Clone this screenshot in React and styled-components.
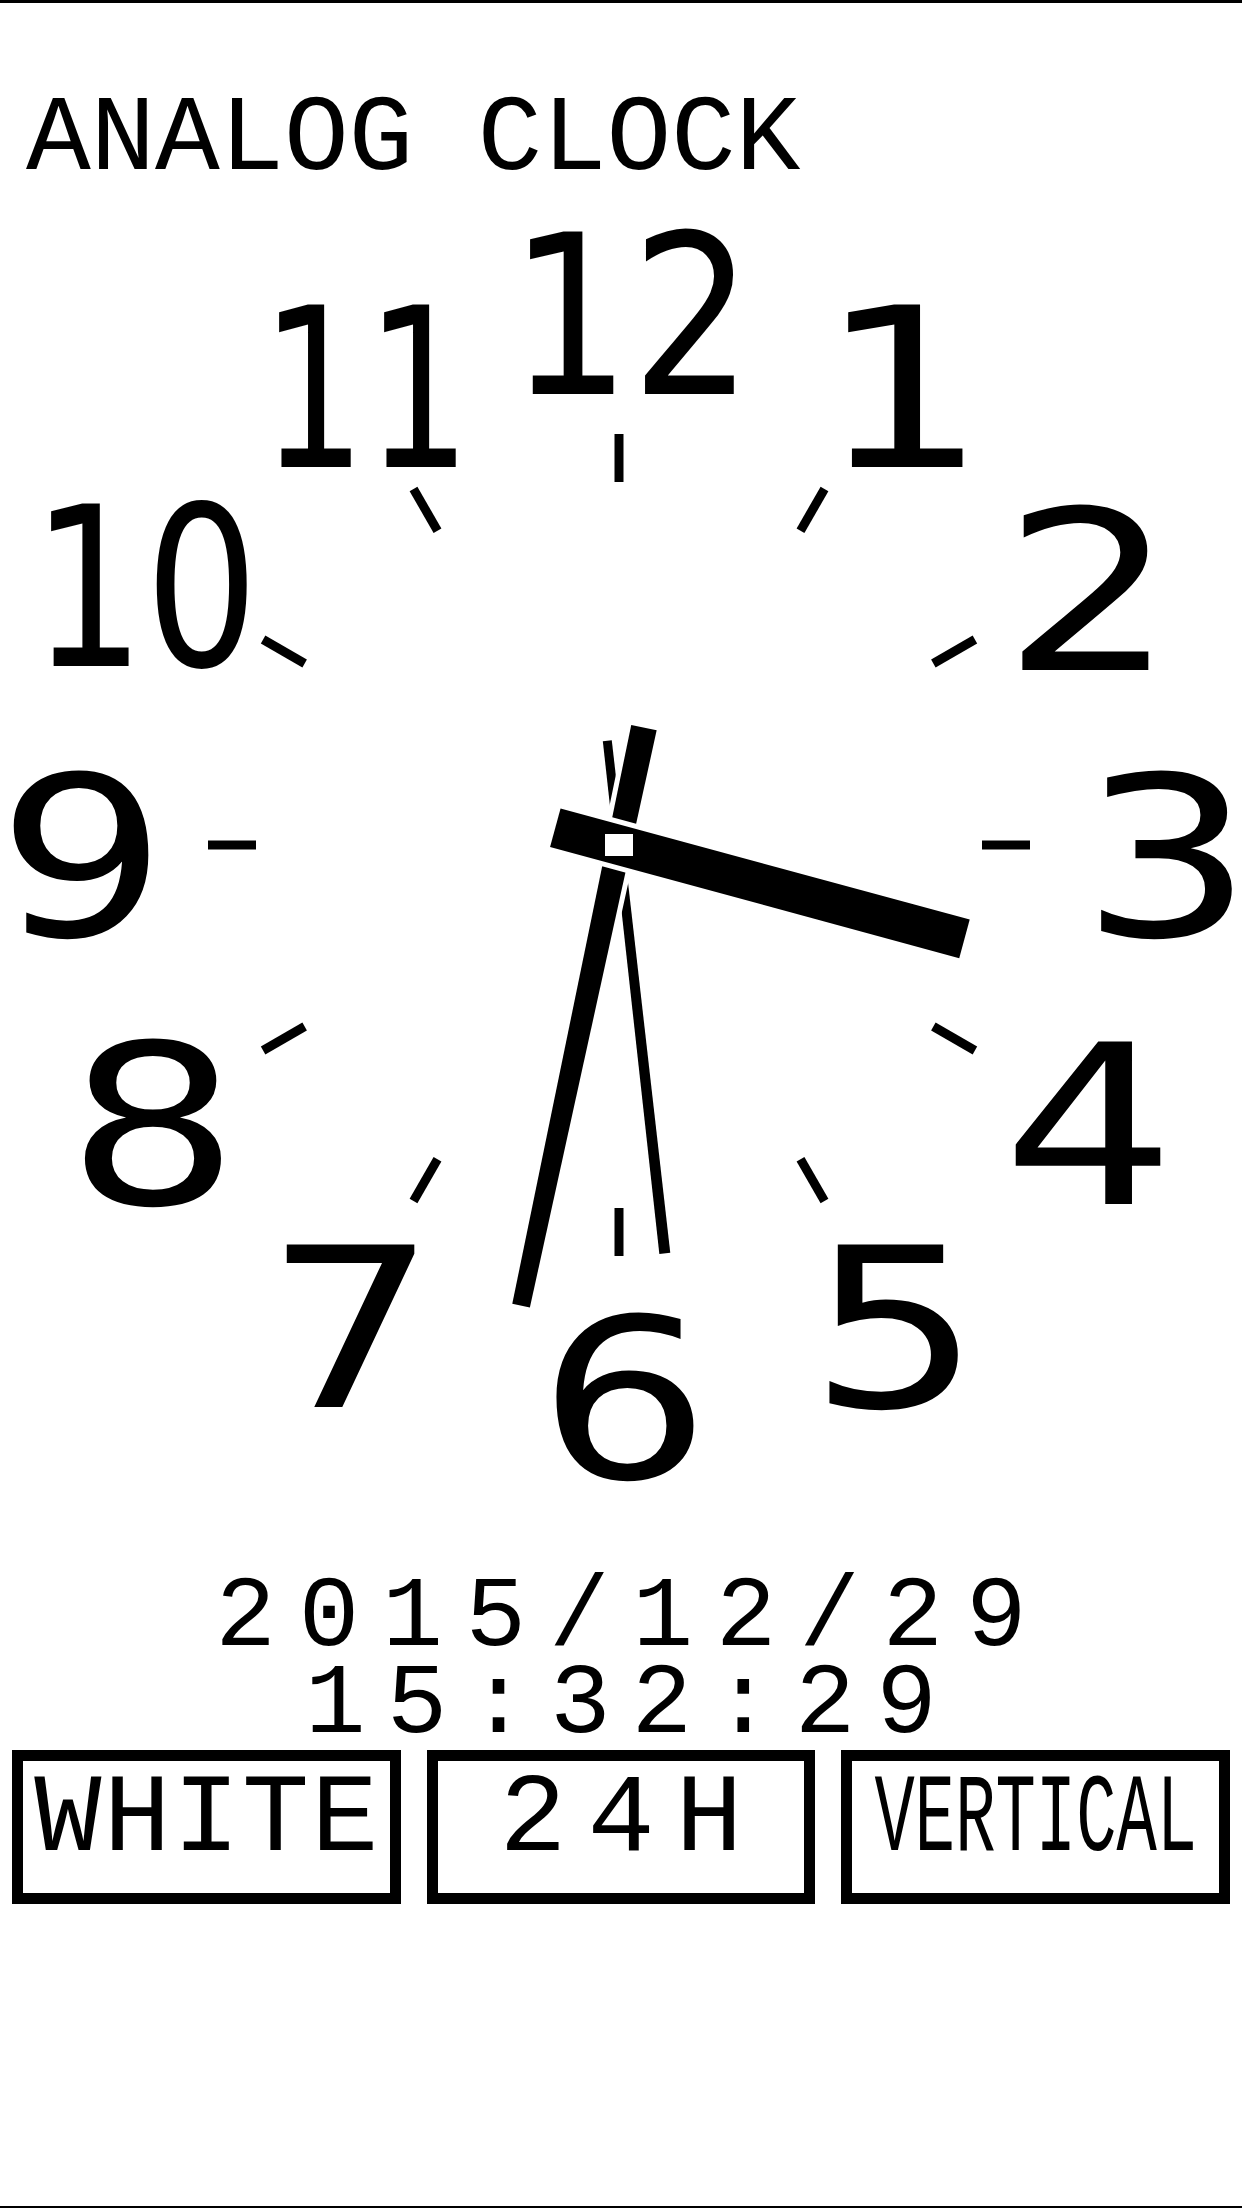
import React from 'react';
import styled, { createGlobalStyle } from 'styled-components';

const GlobalStyle = createGlobalStyle`
  html, body {
    margin: 0;
    padding: 0;
    background: #fff;
  }
  body {
    font-family: "Liberation Mono", monospace;
  }
`;

const Screen = styled.div`
  width: 1242px;
  height: 2208px;
  box-sizing: border-box;
  border-top: 3px solid #000;
  border-bottom: 2px solid #000;
  background: #fff;
  color: #000;
  display: flex;
  flex-direction: column;
`;

const Title = styled.h1`
  margin: 0;
  padding: 83px 0 0 26px;
  font: 400 108px/108px "Liberation Mono", monospace;
  letter-spacing: -0.3px;
  white-space: pre;
`;

const Face = styled.svg`
  display: block;
  margin-top: 6px;
  width: 1242px;
  height: 1362px;
`;

const Readout = styled.div`
  font: 400 101px/87px "Liberation Mono", monospace;
  text-align: center;
  white-space: pre;
  letter-spacing: ${p => p.$spacing}px;
  padding-left: ${p => p.$spacing}px;
  margin-top: ${p => p.$top || 0}px;
`;

const ButtonRow = styled.div`
  display: grid;
  grid-template-columns: repeat(3, minmax(0, 1fr));
  gap: 26px;
  padding: 0 12px;
  margin-top: 1px;
`;

const ModeButton = styled.button`
  box-sizing: border-box;
  min-width: 0;
  height: 154px;
  margin: 0;
  padding: 15px 0 0;
  border: 11px solid #000;
  border-radius: 0;
  background: #fff;
  color: #000;
  display: flex;
  justify-content: center;
  align-items: flex-start;
  overflow: visible;
  font: 400 112px/89px "Liberation Mono", monospace;
  cursor: pointer;
`;

const Label = styled.span`
  display: inline-block;
  flex-shrink: 0;
  letter-spacing: ${p => p.$spacing || 0}px;
  padding-left: ${p => p.$spacing || 0}px;
  transform: scaleX(${p => p.$squeeze || 1});
  transform-origin: center;
`;

// clock drawing, page coordinates (viewBox starts at y=200)
const CX = 619;
const CY = 845;

const numerals = [
  ['12', 631, 394, 0.86],
  ['1', 903, 467, 1.18],
  ['2', 1089, 670, 1.22],
  ['3', 1167, 936, 1.22],
  ['4', 1089, 1204, 1.22],
  ['5', 895, 1407, 1.22],
  ['6', 624, 1478, 1.22],
  ['7', 351, 1407, 1.22],
  ['8', 153, 1204, 1.22],
  ['9', 82, 936, 1.2],
  ['10', 145, 666, 0.8],
  ['11', 366, 467, 0.74],
];

// second, minute, hour: drawn in that order, each outlined in white
const hands = [
  { deg: 173.6, tail: 105, len: 411, w0: 9, w1: 11 },
  { deg: 192, tail: 120, len: 471, w0: 26, w1: 18 },
  { deg: 105.2, tail: 66, len: 358, w0: 40, w1: 40 },
];

function polar(deg, r) {
  const a = (deg * Math.PI) / 180;
  return [CX + Math.sin(a) * r, CY - Math.cos(a) * r];
}

function Hand({ deg, tail, len, w0, w1 }) {
  const [x1, y1] = polar(deg + 180, tail);
  const [x2, y2] = polar(deg, len);
  const a = (deg * Math.PI) / 180;
  const nx = Math.cos(a);
  const ny = Math.sin(a);
  const pts = [
    [x1 + (nx * w0) / 2, y1 + (ny * w0) / 2],
    [x2 + (nx * w1) / 2, y2 + (ny * w1) / 2],
    [x2 - (nx * w1) / 2, y2 - (ny * w1) / 2],
    [x1 - (nx * w0) / 2, y1 - (ny * w0) / 2],
  ]
    .map(p => p.join(','))
    .join(' ');
  return <polygon points={pts} fill="#000" stroke="#fff" strokeWidth="10" paintOrder="stroke" />;
}

function ClockFace() {
  return (
    <Face viewBox="0 200 1242 1362">
      {Array.from({ length: 12 }, (_, i) => {
        const [x1, y1] = polar(i * 30, 363);
        const [x2, y2] = polar(i * 30, 411);
        return <line key={i} x1={x1} y1={y1} x2={x2} y2={y2} stroke="#000" strokeWidth="9" />;
      })}
      {numerals.map(([n, x, y, sx]) => (
        <text
          key={n}
          transform={`translate(${x} ${y}) scale(${sx} 1)`}
          textAnchor="middle"
          fontFamily="DejaVu Sans, sans-serif"
          fontSize="223"
          fill="#000"
        >
          {n}
        </text>
      ))}
      {hands.map((h, i) => (
        <Hand key={i} {...h} />
      ))}
      <rect x={CX - 14} y={CY - 11} width="28" height="22" fill="#fff" />
    </Face>
  );
}

export default function App() {
  return (
    <>
      <GlobalStyle />
      <Screen>
        <Title>ANALOG CLOCK</Title>
        <ClockFace />
        <Readout $spacing={22.8} $top={13}>2015/12/29</Readout>
        <Readout $spacing={21}>15:32:29</Readout>
        <ButtonRow>
          <ModeButton>
            <Label $spacing={2}>WHITE</Label>
          </ModeButton>
          <ModeButton>
            <Label $spacing={21}>24H</Label>
          </ModeButton>
          <ModeButton>
            <Label $squeeze={0.6}>VERTICAL</Label>
          </ModeButton>
        </ButtonRow>
      </Screen>
    </>
  );
}
